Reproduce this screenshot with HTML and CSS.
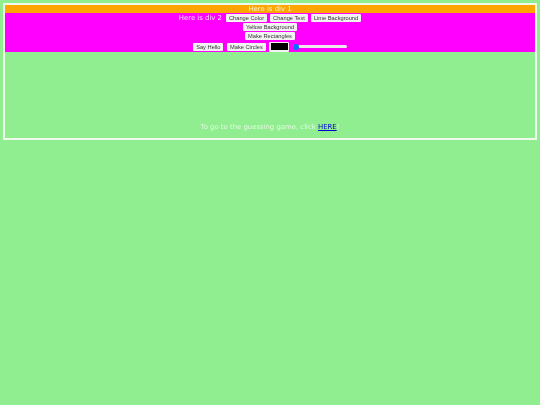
FILE: index.html
```html
<!DOCTYPE html>
<html lang="en">
<head>
<meta charset="utf-8">
<title>Divs</title>
<link rel="stylesheet" href="styles.css">
</head>
<body>
<div class="frame">
  <div class="div1">Here is div 1</div>
  <div class="div2">
    <div class="row"><span class="label">Here is div 2</span><button>Change Color</button><button>Change Text</button><button>Lime Background</button></div>
    <div class="row"><button>Yellow Background</button></div>
    <div class="row"><button>Make Rectangles</button></div>
    <div class="row tall"><button>Say Hello</button><button>Make Circles</button><span class="swatch"><span class="swatch-fill"></span></span><span class="slider"><span class="thumb"></span></span></div>
  </div>
  <div class="div3"><p class="game">To go to the guessing game, click <a href="#">HERE</a>!</p></div>
</div>
</body>
</html>
```
FILE: styles.css
```css
html, body { margin: 0; padding: 0; }
body {
  background: #90ee90;
  padding: 3px;
  height: 405px;
  box-sizing: border-box;
  font-family: "DejaVu Sans", sans-serif;
  color: #fff;
  text-rendering: geometricPrecision;
}
.frame {
  border: 2px solid #eefaea;
  height: 137px;
  box-sizing: border-box;
  display: flex;
  flex-direction: column;
  filter: blur(0.4px);
}
.div1 {
  background: #ffa500;
  height: 7.5px;
  line-height: 9px;
  font-size: 6.9px;
  text-align: center;
  flex: none;
  color: #fff3d0;
}
.div2 {
  background: #ff00ff;
  height: 39.5px;
  flex: none;
  display: flex;
  flex-direction: column;
  align-items: center;
  padding-top: 1px;
  box-sizing: border-box;
  color: #ffe0ff;
}
.row {
  display: flex;
  align-items: center;
  justify-content: center;
  height: 9px;
  gap: 3px;
}
.tall { height: 11px; margin-top: 0.5px; gap: 3.5px; }
.label { font-size: 6.9px; line-height: 9px; margin-right: 1px; }
button {
  font-family: "Liberation Sans", sans-serif;
  font-size: 5.7px;
  line-height: 8px;
  height: 8px;
  padding: 0 3px;
  background: #f2f2f2;
  border: 0;
  border-radius: 1px;
  color: #333;
}
.swatch {
  width: 20px;
  height: 10px;
  background: #f2f2f2;
  border-radius: 1px;
  padding: 1.5px;
  box-sizing: border-box;
  display: block;
}
.swatch-fill { display: block; height: 100%; background: #000; }
.slider {
  width: 54px;
  height: 2.5px;
  background: #f0e8f0;
  border-radius: 2px;
  position: relative;
  display: block;
}
.thumb {
  position: absolute;
  left: 0;
  top: -1.75px;
  width: 6px;
  height: 6px;
  background: #0075ff;
  border-radius: 50%;
}
.div3 {
  flex: 1;
  display: flex;
  flex-direction: column;
  justify-content: flex-end;
  text-align: center;
}
.game {
  margin: 0 0 6px;
  font-size: 6.9px;
  line-height: 9px;
  color: #e6f8e2;
}
.game a { color: #0000cc; text-decoration: underline; }
```
